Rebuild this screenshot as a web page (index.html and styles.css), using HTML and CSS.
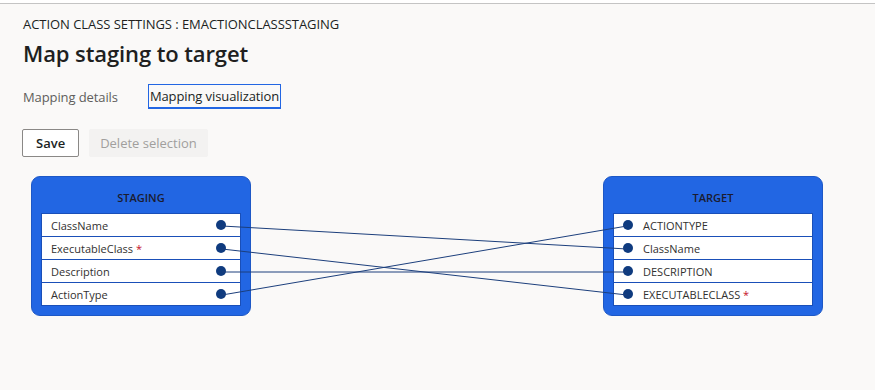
FILE: index.html
```html
<!DOCTYPE html>
<html lang="en">

<head>
    <meta charset="UTF-8">
    <meta name="viewport" content="width=device-width, initial-scale=1.0">
    <title>Map staging to target</title>
    <link rel="stylesheet" href="styles.css">
</head>

<body>
    <div class="topbar"></div>

    <div class="page">
        <div class="caption">ACTION CLASS SETTINGS : EMACTIONCLASSSTAGING</div>
        <h1 class="title">Map staging to target</h1>

        <div class="tabs">
            <span class="tab">Mapping details</span>
            <span class="tab tab-active">Mapping visualization</span>
        </div>

        <div class="toolbar">
            <button class="btn">Save</button>
            <button class="btn btn-disabled" disabled>Delete selection</button>
        </div>

        <div class="diagram">
            <div class="entity">
                <div class="entity-head">STAGING</div>
                <div class="fields">
                    <div class="field field-src"><span>ClassName</span><i class="dot"></i></div>
                    <div class="field field-src"><span>ExecutableClass <b class="req">*</b></span><i class="dot"></i></div>
                    <div class="field field-src"><span>Description</span><i class="dot"></i></div>
                    <div class="field field-src"><span>ActionType</span><i class="dot"></i></div>
                </div>
            </div>

            <div class="entity">
                <div class="entity-head">TARGET</div>
                <div class="fields">
                    <div class="field field-dst"><i class="dot"></i><span>ACTIONTYPE</span></div>
                    <div class="field field-dst"><i class="dot"></i><span>ClassName</span></div>
                    <div class="field field-dst"><i class="dot"></i><span>DESCRIPTION</span></div>
                    <div class="field field-dst"><i class="dot"></i><span>EXECUTABLECLASS <b class="req">*</b></span></div>
                </div>
            </div>

            <!-- mapping lines -->
            <svg class="links" width="792" height="140" viewBox="0 0 792 140">
                <line x1="191" y1="50" x2="596" y2="73" />
                <line x1="191" y1="73" x2="596" y2="119" />
                <line x1="191" y1="96" x2="596" y2="96" />
                <line x1="191" y1="119" x2="596" y2="50" />
            </svg>
        </div>
    </div>
</body>

</html>
```

FILE: styles.css
```css
/* General Reset */
* {
    margin: 0;
    padding: 0;
    box-sizing: border-box;
}

body {
    background-color: #faf9f8;
    color: #201f1e;
    font-family: "Open Sans", "Noto Sans", Arial, sans-serif;
    height: 390px;
    overflow: hidden;
}

.topbar {
    height: 4px;
    background-color: #fff;
    border-bottom: 1px solid #c4c4c4;
}

.page {
    padding: 11px 0 0 23px;
}

.caption {
    font-size: 13px;
    letter-spacing: -0.05px;
    line-height: 18px;
}

.title {
    font-size: 22px;
    font-weight: 600;
    line-height: 32px;
    margin-top: 4px;
    letter-spacing: -0.1px;
}

.tabs {
    display: flex;
    align-items: center;
    gap: 30px;
    margin-top: 15px;
    height: 25px;
}

.tab {
    font-size: 13px;
    color: #605e5c;
    letter-spacing: -0.1px;
}

.tab-active {
    color: #201f1e;
    border: 1px solid #2266e3;
    border-bottom-width: 2px;
    padding: 2px 1px 1px 1px;
    height: 25px;
    line-height: 19px;
}

.toolbar {
    display: flex;
    gap: 10px;
    margin-top: 20px;
    margin-left: -1px;
}

.btn {
    font-family: inherit;
    font-size: 13px;
    font-weight: 600;
    height: 28px;
    padding: 0 13px;
    background-color: #fff;
    color: #201f1e;
    border: 1px solid #8a8886;
    border-radius: 2px;
}

.btn-disabled {
    background-color: #f3f2f1;
    border-color: #f3f2f1;
    color: #a19f9d;
    font-weight: 400;
    padding: 0 10px;
}

.diagram {
    position: relative;
    display: flex;
    justify-content: space-between;
    width: 792px;
    margin: 19px 0 0 8px;
}

.entity {
    width: 220px;
    height: 140px;
    background-color: #2266e3;
    border: 1px solid #1d58c6;
    border-radius: 9px;
    padding: 0 9px 0 9px;
}

.entity-head {
    height: 36px;
    line-height: 41px;
    text-align: center;
    font-size: 11px;
    font-weight: 600;
    color: #1b1b2f;
}

.fields {
    display: flex;
    flex-direction: column;
    gap: 1px;
    background-color: #1a4fb8;
    border: 1px solid #1a4fb8;
}

.field {
    display: flex;
    align-items: center;
    height: 22px;
    background-color: #fff;
    font-size: 11px;
    color: #323130;
}

.field-src {
    justify-content: space-between;
    padding: 0 14px 0 9px;
}

.field-dst {
    padding-left: 9px;
    gap: 10px;
}

.req {
    color: #c50f1f;
    font-weight: 400;
}

.dot {
    display: block;
    width: 10px;
    height: 10px;
    border-radius: 50%;
    background-color: #0f3b7f;
}

.links {
    position: absolute;
    left: 0;
    top: 0;
    pointer-events: none;
}

.links line {
    stroke: #1c3f7c;
    stroke-width: 1;
}
```
